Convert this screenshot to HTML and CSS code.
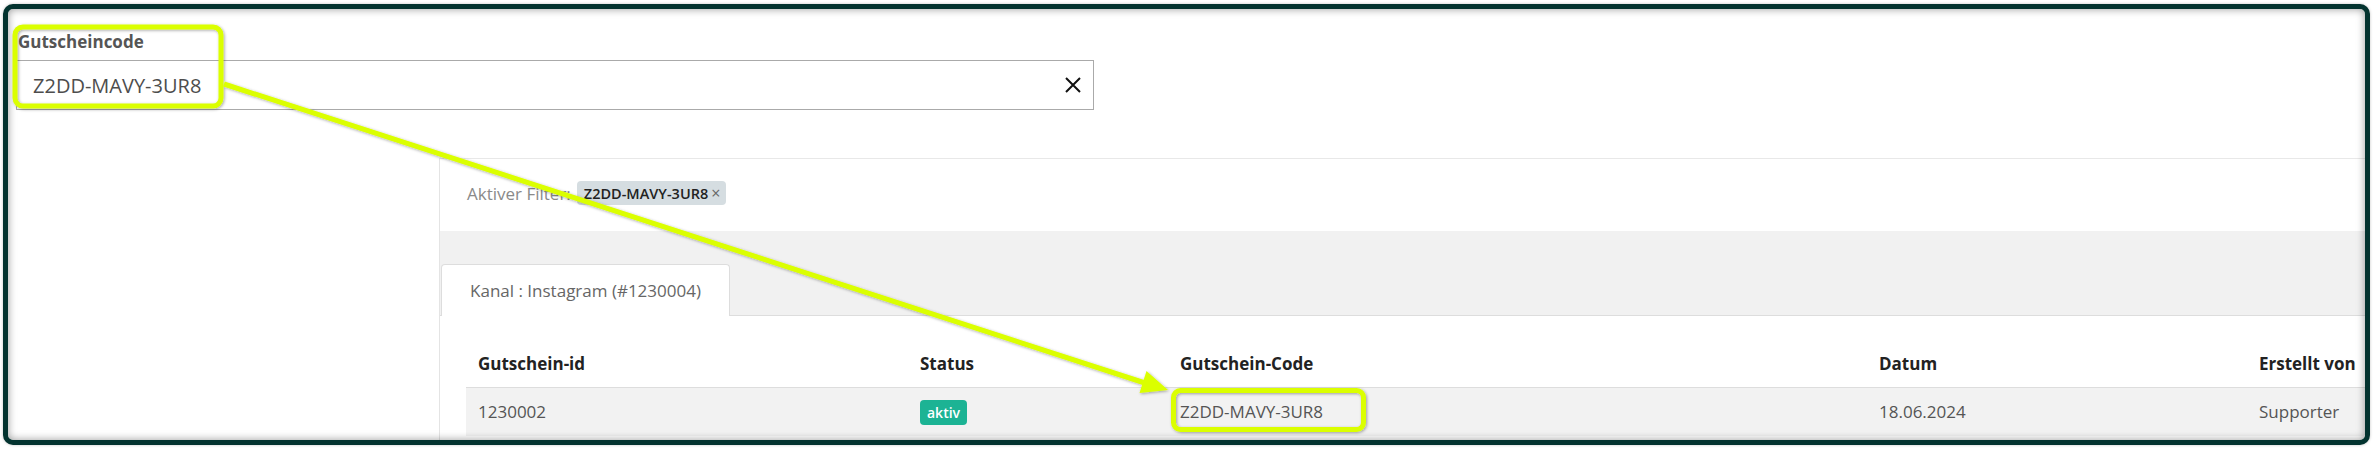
FILE: index.html
```html
<!DOCTYPE html>
<html lang="de">
<head>
    <meta charset="UTF-8">
    <meta name="viewport" content="width=device-width, initial-scale=1.0">
    <title>Gutscheine</title>
    <link rel="stylesheet" href="styles.css">
</head>
<body>
    <div class="frame">
        <div class="search">
            <label class="search-label">Gutscheincode</label>
            <div class="search-box">
                <span class="search-value">Z2DD-MAVY-3UR8</span>
                <svg class="clear-icon" width="18" height="18" viewBox="0 0 18 18">
                    <path d="M2 2L16 16M16 2L2 16" stroke="#111" stroke-width="2" fill="none"/>
                </svg>
            </div>
        </div>

        <div class="main">
            <div class="sidebar"></div>
            <div class="panel">
                <div class="filter-bar">
                    <span class="filter-label">Aktiver Filter:</span>
                    <span class="chip">Z2DD-MAVY-3UR8<span class="chip-x">&times;</span></span>
                </div>

                <div class="tabs">
                    <div class="tab">Kanal : Instagram (#1230004)</div>
                </div>

                <div class="tab-content">
                    <table class="vouchers">
                        <colgroup>
                            <col class="col-id">
                            <col class="col-status">
                            <col class="col-code">
                            <col class="col-date">
                            <col>
                        </colgroup>
                        <thead>
                            <tr>
                                <th>Gutschein-id</th>
                                <th>Status</th>
                                <th>Gutschein-Code</th>
                                <th>Datum</th>
                                <th>Erstellt von</th>
                            </tr>
                        </thead>
                        <tbody>
                            <tr>
                                <td>1230002</td>
                                <td><span class="badge">aktiv</span></td>
                                <td>Z2DD-MAVY-3UR8</td>
                                <td>18.06.2024</td>
                                <td>Supporter</td>
                            </tr>
                        </tbody>
                    </table>
                </div>
            </div>
        </div>
    </div>

    <!-- annotation layer: highlight boxes and arrow -->
    <svg class="annotations" width="2373" height="449" viewBox="0 0 2373 449">
        <defs>
            <filter id="soft" x="-10%" y="-10%" width="120%" height="120%">
                <feDropShadow dx="1" dy="1" stdDeviation="1.5" flood-color="#000" flood-opacity="0.35"/>
            </filter>
        </defs>
        <g filter="url(#soft)" stroke="#dbff00" fill="none" stroke-width="5">
            <rect x="15" y="27" width="206" height="79" rx="8"/>
            <rect x="1173.5" y="390.5" width="190" height="39" rx="7"/>
            <line x1="224" y1="84" x2="1145" y2="383"/>
            <polygon points="1168,390 1139.5,393 1146.5,371" fill="#dbff00" stroke="none"/>
        </g>
    </svg>
</body>
</html>
```

FILE: styles.css
```css
* {
    box-sizing: border-box;
}
body {
    margin: 0;
    background: #fff;
    font-family: "Open Sans", "Liberation Sans", sans-serif;
    color: #555;
}
.frame {
    position: relative;
    margin: 4px 3px;
    height: 441px;
    border: 5px solid #03332f;
    border-radius: 10px;
    box-shadow: 0 0 3px rgba(0,0,0,0.25);
    background: #fff;
    overflow: hidden;
}
.frame::after {
    content: "";
    position: absolute;
    inset: 0;
    border-radius: 5px;
    box-shadow: inset 0 0 9px rgba(0,0,0,0.4);
    pointer-events: none;
}
.search {
    padding: 23px 0 0 8px;
}
.search-label {
    display: block;
    padding-left: 2px;
    margin-bottom: 8px;
    font-size: 17px;
    line-height: 20px;
    font-weight: 700;
    color: #555;
}
.search-box {
    width: 1078px;
    height: 50px;
    border: 1px solid #aaa;
    display: flex;
    align-items: center;
    justify-content: space-between;
    padding: 0 11px 0 16px;
}
.search-value {
    font-size: 20px;
    color: #4d4d4d;
}
.main {
    display: flex;
    margin-top: 48px;
    height: 300px;
}
.sidebar {
    width: 431px;
    flex-shrink: 0;
}
.panel {
    flex: 1;
    border-left: 1px solid #e4e4e4;
    border-top: 1px solid #e8e8e8;
}
.filter-bar {
    height: 72px;
    display: flex;
    align-items: center;
    gap: 6px;
    padding: 0 0 4px 27px;
}
.filter-label {
    font-size: 17px;
    color: #8a8a8a;
}
.chip {
    height: 24px;
    display: inline-flex;
    align-items: center;
    padding: 0 6px 0 7px;
    background: #d5dde1;
    border-radius: 4px;
    font-size: 14.5px;
    font-weight: 600;
    color: #222;
}
.chip-x {
    margin-left: 3px;
    font-weight: 400;
    font-size: 16px;
    color: #666;
}
.tabs {
    height: 85px;
    padding: 33px 0 0 1px;
    background: #f1f1f1;
    border-bottom: 1px solid #ddd;
    display: flex;
    align-items: flex-end;
}
.tab {
    width: 289px;
    height: 52px;
    margin-bottom: -1px;
    background: #fff;
    border: 1px solid #ddd;
    border-bottom: none;
    border-radius: 4px 4px 0 0;
    display: flex;
    align-items: center;
    justify-content: center;
    font-size: 17px;
    color: #666;
}
.tab-content {
    padding: 24px 0 0 26px;
}
.vouchers {
    width: 100%;
    border-collapse: collapse;
    table-layout: fixed;
    white-space: nowrap;
}
.col-id {
    width: 442px;
}
.col-status {
    width: 260px;
}
.col-code {
    width: 699px;
}
.col-date {
    width: 380px;
}
.vouchers th {
    text-align: left;
    padding: 12px;
    line-height: 23px;
    font-size: 17px;
    font-weight: 700;
    color: #222;
    border-bottom: 1px solid #ddd;
}
.vouchers td {
    padding: 11px 12px;
    line-height: 23px;
    font-size: 17px;
    color: #555;
    background: #f2f2f2;
}
.badge {
    display: inline-block;
    height: 25px;
    line-height: 25px;
    padding: 0 7px;
    border-radius: 4px;
    background: #1cb394;
    color: #fff;
    font-size: 14px;
    font-weight: 600;
    vertical-align: middle;
}
.annotations {
    position: absolute;
    top: 0;
    left: 0;
    pointer-events: none;
}
```
